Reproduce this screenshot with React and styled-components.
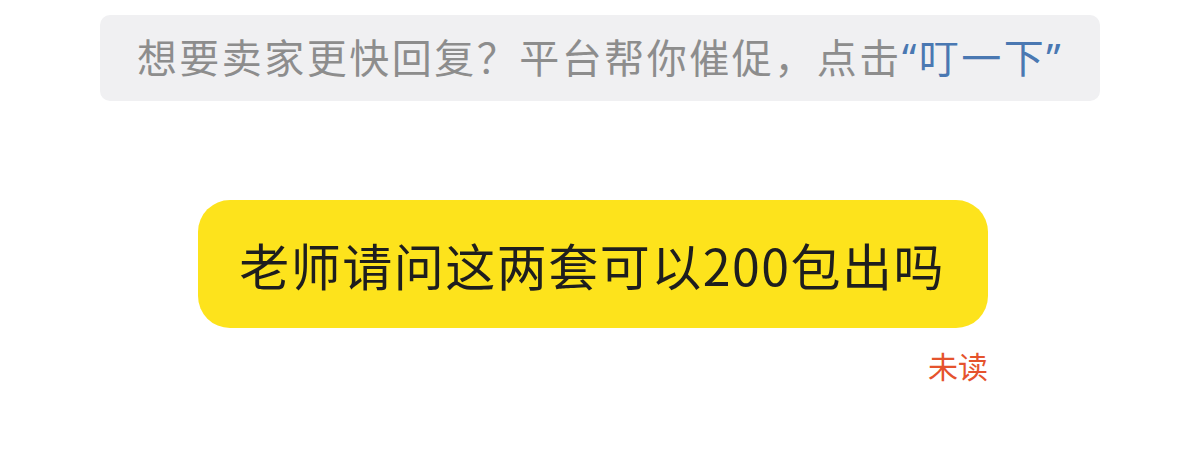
import React from "react";
import styled, { createGlobalStyle } from "styled-components";

const GlobalStyle = createGlobalStyle`
  html, body {
    margin: 0;
    padding: 0;
    background: #ffffff;
  }
  body {
    font-family: "Noto Sans CJK SC", "Noto Sans", sans-serif;
  }
`;

export default function App() {
  const message = {
    text: "老师请问这两套可以200包出吗",
    status: "未读",
  };
  return (
    <>
      <GlobalStyle />
      <Page>
        <Notice>
          想要卖家更快回复？平台帮你催促，点击<Link>“叮一下”</Link>
        </Notice>
        <MessageRow>
          <Message>
            <Bubble>{message.text}</Bubble>
            <Status>{message.status}</Status>
          </Message>
        </MessageRow>
      </Page>
    </>
  );
}

const Page = styled.div`
  width: 1200px;
  height: 470px;
  box-sizing: border-box;
  padding: 15px 100px 0;
  display: flex;
  flex-direction: column;
`;

const Notice = styled.div`
  height: 86px;
  box-sizing: border-box;
  padding-bottom: 4px;
  border-radius: 10px;
  background: #f0f0f2;
  color: #8d8d8d;
  font-family: "Noto Sans", "Noto Sans CJK SC", sans-serif;
  font-size: 40px;
  letter-spacing: 2.5px;
  display: flex;
  align-items: center;
  justify-content: center;
  white-space: nowrap;
`;

const Link = styled.span`
  color: #4a78b2;
`;

const MessageRow = styled.div`
  margin-top: 99px;
  padding-right: 112px;
  display: flex;
  justify-content: flex-end;
`;

const Message = styled.div`
  display: flex;
  flex-direction: column;
  align-items: flex-end;
`;

const Bubble = styled.div`
  height: 128px;
  box-sizing: border-box;
  padding: 0 43px 0 41px;
  border-radius: 32px;
  background: #fde31c;
  color: #1e1e1e;
  font-size: 50px;
  letter-spacing: 1.5px;
  display: flex;
  align-items: center;
  white-space: nowrap;
`;

const Status = styled.div`
  margin-top: 17px;
  color: #e5532d;
  font-size: 30px;
  line-height: 40px;
`;
